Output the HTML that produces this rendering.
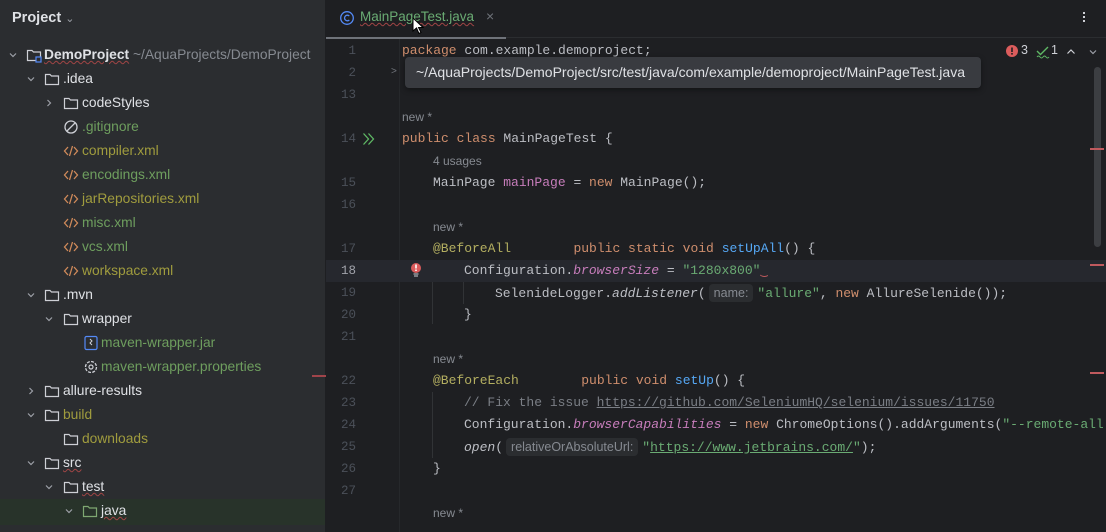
<!DOCTYPE html>
<html><head><meta charset="utf-8"><style>
*{margin:0;padding:0;box-sizing:border-box}
body{width:1106px;height:532px;overflow:hidden;background:#1e1f22;font-family:"Liberation Sans",sans-serif;position:relative}
#side{position:absolute;left:0;top:0;width:326px;height:532px;background:#2b2d30;border-right:1px solid #1e1f22}
.r{position:absolute;height:24px;line-height:24px;font-size:13.8px;color:#dfe1e5;white-space:nowrap}
.ol{color:#a09c3e}.gr{color:#6e9e5e}
.mono{font-family:"Liberation Mono",monospace;font-size:13px}
.l{position:absolute;left:402px;height:22px;line-height:22px;color:#bcbec4;white-space:pre;overflow:hidden;max-width:1106px}
.n{position:absolute;width:30px;text-align:right;left:326px;height:22px;line-height:22px;color:#4b5059;font-family:"Liberation Mono",monospace;font-size:12.5px}
.k{color:#cf8e6d}.s{color:#6aab73}.f{color:#56a8f5}.a{color:#b3ae60}.p{color:#c77dbb}.i{font-style:italic}.c{color:#7a7e85}
.hint{font-family:"Liberation Sans",sans-serif;font-size:12px;color:#868a91}
.hb{font-family:"Liberation Sans",sans-serif;font-size:12.5px;color:#868a91;background:#2b2d30;border-radius:4px;padding:2px 5px;margin:0 4px 0 3px}
.u{text-decoration:underline}
</style></head><body>
<div id="side">
<div class="r" style="left:12px;top:6px;font-weight:bold;font-size:14.5px">Project <span style="color:#9da0a8;font-weight:normal;font-size:11px">&#8964;</span></div>
</div>
<svg width="0" height="0" style="position:absolute"><defs>
<symbol id="fd" viewBox="0 0 16 16"><path d="M1.5 3.5h4.5l1.5 1.5h7v8.5h-13z" fill="none" stroke="#ced0d6" stroke-width="1.2"/></symbol>
<symbol id="xm" viewBox="0 0 16 16"><path d="M5 4L1.5 8 5 12M11 4l3.5 4L11 12M9.5 3L6.5 13" fill="none" stroke="#d08a5a" stroke-width="1.3"/></symbol>
<symbol id="cv" viewBox="0 0 10 10"><path d="M2 3.5l3 3 3-3" fill="none" stroke="#9da0a8" stroke-width="1.2"/></symbol>
<symbol id="cr" viewBox="0 0 10 10"><path d="M3.5 2l3 3-3 3" fill="none" stroke="#9da0a8" stroke-width="1.2"/></symbol>
</defs></svg>

<div style="position:absolute;left:0;top:0;width:326px;height:532px;overflow:hidden">
<svg style="position:absolute;left:8px;top:50px" width="10" height="10"><use href="#cv"/></svg>
<svg style="position:absolute;left:26px;top:47px" width="16" height="16"><use href="#fd"/><rect x="10" y="10" width="5" height="5" fill="#2b2d30" stroke="#548af7" stroke-width="1.2"/></svg>
<div class="r" style="left:44px;top:43px"><b style="text-decoration:underline wavy #a04545;text-decoration-thickness:1px">DemoProject</b> <span style="color:#868a91">~/AquaProjects/DemoProject</span></div>

<svg style="position:absolute;left:26px;top:74px" width="10" height="10"><use href="#cv"/></svg>
<svg style="position:absolute;left:44px;top:71px" width="16" height="16"><use href="#fd"/></svg>
<div class="r" style="left:63px;top:67px">.idea</div>

<svg style="position:absolute;left:44px;top:98px" width="10" height="10"><use href="#cr"/></svg>
<svg style="position:absolute;left:63px;top:95px" width="16" height="16"><use href="#fd"/></svg>
<div class="r" style="left:82px;top:91px">codeStyles</div>

<svg style="position:absolute;left:63px;top:119px" width="16" height="16"><circle cx="8" cy="8" r="6" fill="none" stroke="#ced0d6" stroke-width="1.3"/><path d="M4 12L12 4" stroke="#ced0d6" stroke-width="1.3"/></svg>
<div class="r gr" style="left:82px;top:115px">.gitignore</div>

<svg style="position:absolute;left:63px;top:143px" width="16" height="16"><use href="#xm"/></svg>
<div class="r ol" style="left:82px;top:139px">compiler.xml</div>
<svg style="position:absolute;left:63px;top:167px" width="16" height="16"><use href="#xm"/></svg>
<div class="r gr" style="left:82px;top:163px">encodings.xml</div>
<svg style="position:absolute;left:63px;top:191px" width="16" height="16"><use href="#xm"/></svg>
<div class="r ol" style="left:82px;top:187px">jarRepositories.xml</div>
<svg style="position:absolute;left:63px;top:215px" width="16" height="16"><use href="#xm"/></svg>
<div class="r gr" style="left:82px;top:211px">misc.xml</div>
<svg style="position:absolute;left:63px;top:239px" width="16" height="16"><use href="#xm"/></svg>
<div class="r gr" style="left:82px;top:235px">vcs.xml</div>
<svg style="position:absolute;left:63px;top:263px" width="16" height="16"><use href="#xm"/></svg>
<div class="r ol" style="left:82px;top:259px">workspace.xml</div>

<svg style="position:absolute;left:26px;top:290px" width="10" height="10"><use href="#cv"/></svg>
<svg style="position:absolute;left:44px;top:287px" width="16" height="16"><use href="#fd"/></svg>
<div class="r" style="left:63px;top:283px">.mvn</div>

<svg style="position:absolute;left:44px;top:314px" width="10" height="10"><use href="#cv"/></svg>
<svg style="position:absolute;left:63px;top:311px" width="16" height="16"><use href="#fd"/></svg>
<div class="r" style="left:82px;top:307px">wrapper</div>

<svg style="position:absolute;left:83px;top:335px" width="16" height="16"><rect x="2" y="1.5" width="12" height="13" rx="1.5" fill="none" stroke="#548af7" stroke-width="1.2"/><path d="M7 4l2 2-2 2 2 2" fill="none" stroke="#ced0d6" stroke-width="1"/></svg>
<div class="r gr" style="left:101px;top:331px">maven-wrapper.jar</div>
<svg style="position:absolute;left:83px;top:359px" width="16" height="16"><circle cx="8" cy="8" r="5.5" fill="none" stroke="#ced0d6" stroke-width="1.3" stroke-dasharray="3 1.3"/><circle cx="8" cy="8" r="2" fill="none" stroke="#ced0d6" stroke-width="1.2"/></svg>
<div class="r gr" style="left:101px;top:355px">maven-wrapper.properties</div>

<svg style="position:absolute;left:26px;top:386px" width="10" height="10"><use href="#cr"/></svg>
<svg style="position:absolute;left:44px;top:383px" width="16" height="16"><use href="#fd"/></svg>
<div class="r" style="left:63px;top:379px">allure-results</div>

<svg style="position:absolute;left:26px;top:410px" width="10" height="10"><use href="#cv"/></svg>
<svg style="position:absolute;left:44px;top:407px" width="16" height="16"><use href="#fd"/></svg>
<div class="r ol" style="left:63px;top:403px">build</div>
<svg style="position:absolute;left:63px;top:431px" width="16" height="16"><use href="#fd"/></svg>
<div class="r ol" style="left:82px;top:427px">downloads</div>

<svg style="position:absolute;left:26px;top:458px" width="10" height="10"><use href="#cv"/></svg>
<svg style="position:absolute;left:44px;top:455px" width="16" height="16"><use href="#fd"/></svg>
<div class="r" style="left:63px;top:451px;text-decoration:underline wavy #a04545;text-decoration-thickness:1px">src</div>
<svg style="position:absolute;left:44px;top:482px" width="10" height="10"><use href="#cv"/></svg>
<svg style="position:absolute;left:63px;top:479px" width="16" height="16"><use href="#fd"/></svg>
<div class="r" style="left:82px;top:475px;text-decoration:underline wavy #a04545;text-decoration-thickness:1px">test</div>
<div style="position:absolute;left:0;top:499px;width:325px;height:26px;background:#28332a"></div>
<svg style="position:absolute;left:64px;top:506px" width="10" height="10"><use href="#cv"/></svg>
<svg style="position:absolute;left:82px;top:503px" width="16" height="16"><path d="M1.5 3.5h4.5l1.5 1.5h7v8.5h-13z" fill="none" stroke="#7fa872" stroke-width="1.2"/></svg>
<div class="r" style="left:101px;top:499px;text-decoration:underline wavy #a04545;text-decoration-thickness:1px">java</div>
<div style="position:absolute;left:312px;top:375px;width:14px;height:2px;background:#a0444a"></div>
</div>

<svg style="position:absolute;left:339px;top:10px" width="16" height="16"><circle cx="8" cy="8" r="6.3" fill="none" stroke="#548af7" stroke-width="1.3"/><path d="M10.3 6A2.8 2.8 0 1 0 10.3 10" fill="none" stroke="#548af7" stroke-width="1.3"/></svg>
<div style="position:absolute;left:360px;top:9px;font-size:13.5px;color:#6aab73;text-decoration:underline wavy #a04545;text-decoration-thickness:1px">MainPageTest.java</div>
<div style="position:absolute;left:486px;top:8px;font-size:14px;color:#6f737a">×</div>
<svg style="position:absolute;left:412px;top:17px" width="12" height="18"><path d="M1 1v13l3.5-3 2.5 5.5 2-1-2.5-5H11z" fill="#fff" stroke="#000" stroke-width="1"/></svg>
<div style="position:absolute;left:1083px;top:10px;width:4px"><div style="width:2px;height:2px;background:#ced0d6;margin:2px 0"></div><div style="width:2px;height:2px;background:#ced0d6;margin:2px 0"></div><div style="width:2px;height:2px;background:#ced0d6;margin:2px 0"></div></div>
<div style="position:absolute;left:326px;top:37px;width:780px;height:1px;background:#2b2d30"></div>
<div style="position:absolute;left:326px;top:37px;width:180px;height:2px;background:#6f737a"></div>

<div style="position:absolute;left:399px;top:39px;width:1px;height:493px;background:#26282b"></div>
<div style="position:absolute;left:326px;top:260px;width:780px;height:22px;background:#26282e"></div>

<svg style="position:absolute;left:1006px;top:45px" width="12" height="12"><circle cx="6" cy="6" r="6" fill="#db5c5c"/><rect x="5.2" y="2.5" width="1.6" height="4.5" fill="#1e1f22"/><rect x="5.2" y="8" width="1.6" height="1.6" fill="#1e1f22"/></svg>
<div style="position:absolute;left:1021px;top:43px;font-size:12.5px;color:#ced0d6">3</div>
<svg style="position:absolute;left:1036px;top:45px" width="14" height="14"><path d="M1 6l3.5 3.5L12 2" fill="none" stroke="#5fb865" stroke-width="1.4"/><path d="M1 12q1.5-2 3 0t3 0 3 0 3 0" fill="none" stroke="#5fb865" stroke-width="1"/></svg>
<div style="position:absolute;left:1051px;top:43px;font-size:12.5px;color:#ced0d6">1</div>
<svg style="position:absolute;left:1066px;top:47px" width="10" height="10"><path d="M1.5 6.5l3.5-3.5 3.5 3.5" fill="none" stroke="#ced0d6" stroke-width="1.2"/></svg>
<svg style="position:absolute;left:1088px;top:47px" width="10" height="10"><use href="#cv"/></svg>
<div style="position:absolute;left:1094px;top:67px;width:7px;height:180px;background:#3c3e42;border-radius:4px"></div>
<div style="position:absolute;left:1090px;top:148px;width:14px;height:2px;background:#c05a5e"></div>
<div style="position:absolute;left:1090px;top:264px;width:14px;height:2px;background:#c05a5e"></div>
<div style="position:absolute;left:1090px;top:372px;width:14px;height:2px;background:#c05a5e"></div>

<div class="n" style="top:40px">1</div>
<div class="n" style="top:62px">2</div>
<div class="n" style="top:84px">13</div>
<div class="n" style="top:128px">14</div>
<div class="n" style="top:172px">15</div>
<div class="n" style="top:194px">16</div>
<div class="n" style="top:238px">17</div>
<div class="n" style="top:260px;color:#a1a3ab">18</div>
<div class="n" style="top:282px">19</div>
<div class="n" style="top:304px">20</div>
<div class="n" style="top:326px">21</div>
<div class="n" style="top:370px">22</div>
<div class="n" style="top:392px">23</div>
<div class="n" style="top:414px">24</div>
<div class="n" style="top:436px">25</div>
<div class="n" style="top:458px">26</div>
<div class="n" style="top:480px">27</div>
<div style="position:absolute;left:391px;top:66px;color:#6f737a;font-size:10px">&gt;</div>
<svg style="position:absolute;left:362px;top:132px" width="14" height="14"><path d="M1.5 1.5l5 5.5-5 5.5M6.5 1.5l5 5.5-5 5.5" fill="none" stroke="#5fb865" stroke-width="1.3"/></svg>
<svg style="position:absolute;left:409px;top:262px" width="14" height="16"><circle cx="7" cy="6" r="5" fill="#db5c5c"/><rect x="6.2" y="2.5" width="1.6" height="4" fill="#fff"/><rect x="6.2" y="7.5" width="1.6" height="1.5" fill="#fff"/><path d="M4.5 12h5M5 14h4" stroke="#ced0d6" stroke-width="1"/></svg>

<div style="position:absolute;left:432px;top:282px;width:1px;height:42px;background:#313336"></div>
<div style="position:absolute;left:463px;top:282px;width:1px;height:22px;background:#313336"></div>
<div style="position:absolute;left:432px;top:392px;width:1px;height:66px;background:#313336"></div>

<div class="mono" style="position:absolute;left:0;top:0;width:1106px;height:532px;overflow:hidden">
<div class="l" style="top:40px"><span class="k">package</span> com.example.demoproject;</div>
<div class="l hint" style="top:106px">new *</div>
<div class="l" style="top:128px"><span class="k">public class</span> MainPageTest {</div>
<div class="l hint" style="top:150px;left:433px">4 usages</div>
<div class="l" style="top:172px;left:433px">MainPage <span class="p">mainPage</span> = <span class="k">new</span> MainPage();</div>
<div class="l hint" style="top:216px;left:433px">new *</div>
<div class="l" style="top:238px;left:433px"><span class="a">@BeforeAll</span>        <span class="k">public static void</span> <span class="f">setUpAll</span>() {</div>
<div class="l" style="top:260px;left:464px">Configuration.<span class="p i">browserSize</span> = <span class="s">"1280x800"</span><span style="color:#c05a5e">&#8255;</span></div>
<div class="l" style="top:282px;left:495px">SelenideLogger.<span class="i">addListener</span>(<span class="hb">name:</span><span class="s">"allure"</span>, <span class="k">new</span> AllureSelenide());</div>
<div class="l" style="top:304px;left:464px">}</div>
<div class="l hint" style="top:348px;left:433px">new *</div>
<div class="l" style="top:370px;left:433px"><span class="a">@BeforeEach</span>        <span class="k">public void</span> <span class="f">setUp</span>() {</div>
<div class="l c" style="top:392px;left:464px">// Fix the issue <span class="u">https://github.com/SeleniumHQ/selenium/issues/11750</span></div>
<div class="l" style="top:414px;left:464px">Configuration.<span class="p i">browserCapabilities</span> = <span class="k">new</span> ChromeOptions().addArguments(<span class="s">"--remote-all</span></div>
<div class="l" style="top:436px;left:464px"><span class="i">open</span>(<span class="hb">relativeOrAbsoluteUrl:</span><span class="s">"<span class="u">https://www.jetbrains.com/</span>"</span>);</div>
<div class="l" style="top:458px;left:433px">}</div>
<div class="l hint" style="top:502px;left:433px">new *</div>
</div>

<div style="position:absolute;left:405px;top:57px;width:576px;height:31px;background:#393b40;border-radius:4px;color:#dfe1e5;font-size:14px;line-height:31px;padding-left:11px;white-space:nowrap;overflow:hidden;box-shadow:0 2px 6px rgba(0,0,0,.4)">~/AquaProjects/DemoProject/src/test/java/com/example/demoproject/MainPageTest.java</div>
</body></html>
